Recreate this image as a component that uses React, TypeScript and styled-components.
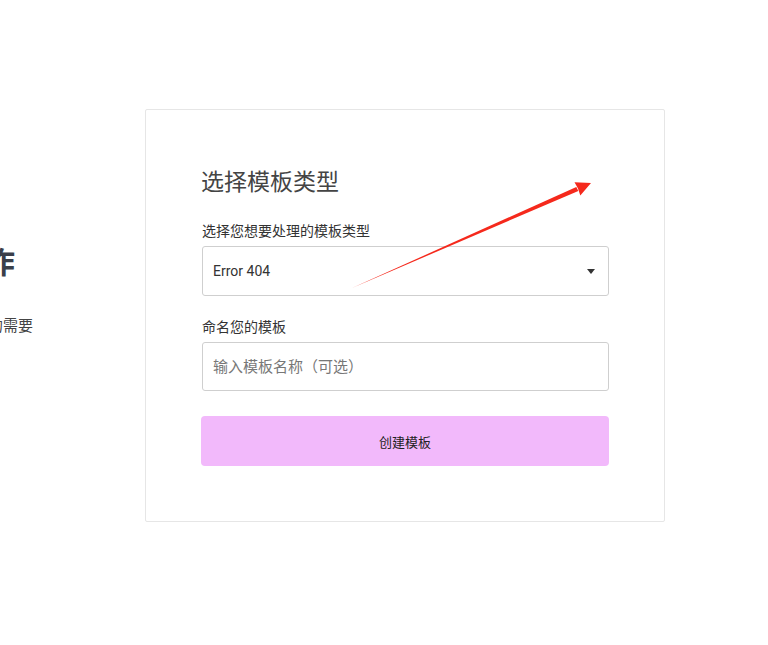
import React from "react"
import styled, { createGlobalStyle } from "styled-components"

const GlobalStyle = createGlobalStyle`
  html, body {
    margin: 0;
    padding: 0;
    background: #ffffff;
  }
  body {
    font-family: Roboto, "Noto Sans CJK SC", sans-serif;
    color: #333333;
  }
  * {
    box-sizing: border-box;
  }
`

const Page = styled.div`
  position: relative;
  width: 768px;
  height: 645px;
  overflow: hidden;
  display: grid;
  grid-template-columns: 145px 520px;
  align-items: start;
  padding-top: 109px;
`

const Intro = styled.div`
  overflow: hidden;
  display: flex;
  flex-direction: column;
  align-items: flex-end;
  padding-top: 136px;
  padding-right: 112px;
`

const IntroTitle = styled.h1`
  margin: 0 18px 0 0;
  white-space: nowrap;
  font-size: 30px;
  line-height: 36px;
  font-weight: 700;
  color: #3a3f4a;
`

const IntroText = styled.p`
  margin: 35px 0 0;
  white-space: nowrap;
  font-size: 15px;
  line-height: 20px;
  color: #444444;
`

const Card = styled.form`
  width: 520px;
  height: 413px;
  border: 1px solid #e6e6e6;
  border-radius: 2px;
  background: #ffffff;
  padding: 58px 55px 55px 55px;
  display: flex;
  flex-direction: column;
`

const CardTitle = styled.h2`
  margin: 0 0 24px;
  font-size: 23px;
  line-height: 30px;
  font-weight: 400;
  color: #444444;
`

const Field = styled.div<{ $gap?: number }>`
  display: flex;
  flex-direction: column;
  gap: 6px;
  margin-bottom: ${p => p.$gap ?? 0}px;
  padding-left: 1px;
`

const Label = styled.label`
  font-size: 14px;
  line-height: 18px;
  color: #333333;
`

const SelectBox = styled.div`
  position: relative;
  height: 50px;
  border: 1px solid #cfcfcf;
  border-radius: 3px;
  display: flex;
  align-items: center;
  padding: 0 10px;
  font-size: 14px;
  color: #333333;
`

const Caret = styled.span`
  margin-left: auto;
  margin-right: 3px;
  width: 0;
  height: 0;
  border-left: 4.5px solid transparent;
  border-right: 4.5px solid transparent;
  border-top: 5px solid #333333;
`

const TextInput = styled.input`
  height: 49px;
  border: 1px solid #cfcfcf;
  border-radius: 3px;
  padding: 0 10px;
  font-family: Roboto, "Noto Sans CJK SC", sans-serif;
  font-size: 15px;
  color: #333333;
  outline: none;
  &::placeholder {
    color: #777777;
  }
`

const SubmitButton = styled.button`
  height: 50px;
  border: none;
  border-radius: 4px;
  background: #f2b9fb;
  font-family: Roboto, "Noto Sans CJK SC", sans-serif;
  font-size: 13px;
  color: #222222;
  cursor: pointer;
`

const Annotation = styled.svg`
  position: absolute;
  left: 0;
  top: 0;
  pointer-events: none;
`

export default function App() {
  return (
    <>
      <GlobalStyle />
      <Page>
        <Intro>
          <IntroTitle>开始您的模板创作</IntroTitle>
          <IntroText>选择适合您的模板，满足您的需要</IntroText>
        </Intro>
        <Card onSubmit={e => e.preventDefault()}>
          <CardTitle>选择模板类型</CardTitle>
          <Field $gap={22}>
            <Label>选择您想要处理的模板类型</Label>
            <SelectBox>
              Error 404
              <Caret />
            </SelectBox>
          </Field>
          <Field $gap={25}>
            <Label>命名您的模板</Label>
            <TextInput placeholder="输入模板名称（可选）" />
          </Field>
          <SubmitButton type="submit">创建模板</SubmitButton>
        </Card>
        <Annotation width="768" height="645" viewBox="0 0 768 645">
          <polygon
            points="352,288 578.3,190.9 576.3,186.9"
            fill="#f5291c"
          />
          <polygon
            points="591,183 574.5,182.3 578,188.6 580.3,195.6"
            fill="#f5291c"
          />
        </Annotation>
      </Page>
    </>
  )
}
